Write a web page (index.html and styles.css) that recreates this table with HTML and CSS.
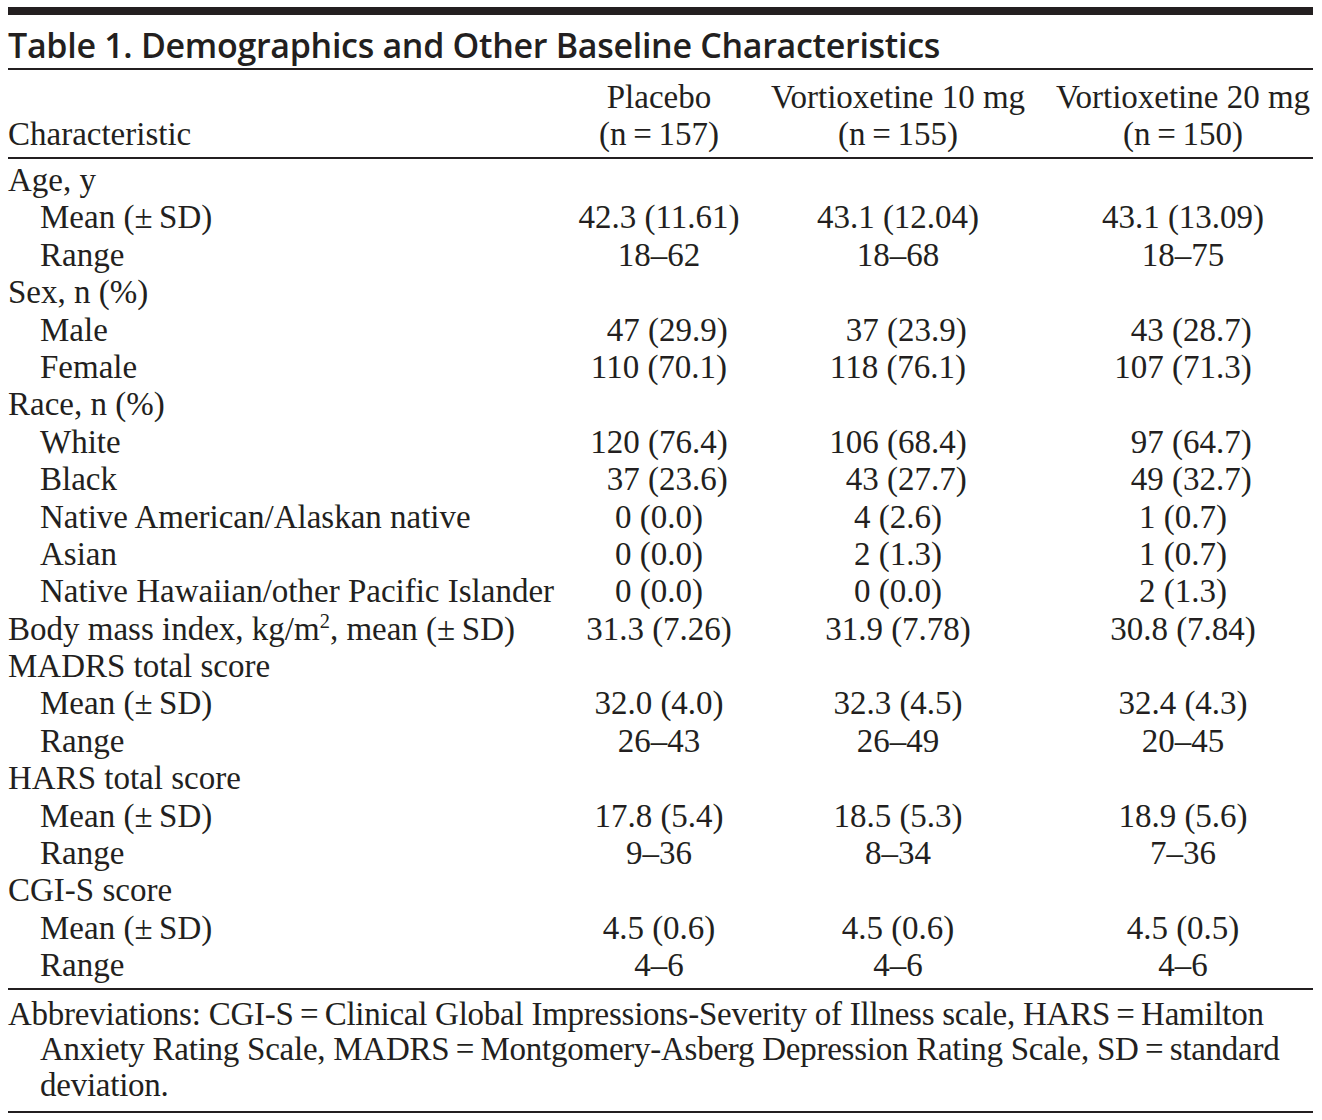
FILE: index.html
```html
<!DOCTYPE html>
<html lang="en">
<head>
<meta charset="utf-8">
<title>Table 1. Demographics and Other Baseline Characteristics</title>
<link rel="stylesheet" href="styles.css">
</head>
<body>
<div class="page">
  <div class="top-rule"></div>
  <h1 class="title">Table 1. Demographics and Other Baseline Characteristics</h1>
  <div class="table">
    <div class="head">
      <div class="hc label">Characteristic</div>
      <div class="hc">Placebo<br>(n&#8201;=&#8201;157)</div>
      <div class="hc">Vortioxetine 10 mg<br>(n&#8201;=&#8201;155)</div>
      <div class="hc">Vortioxetine 20 mg<br>(n&#8201;=&#8201;150)</div>
    </div>
    <div class="body">
      <div class="c label">Age, y</div><div class="c"></div><div class="c"></div><div class="c"></div>
      <div class="c label sub">Mean (&#177;&#8201;SD)</div><div class="c p">42.3 (11.61)</div><div class="c">43.1 (12.04)</div><div class="c">43.1 (13.09)</div>
      <div class="c label sub">Range</div><div class="c p">18–62</div><div class="c">18–68</div><div class="c">18–75</div>
      <div class="c label">Sex, n (%)</div><div class="c"></div><div class="c"></div><div class="c"></div>
      <div class="c label sub">Male</div><div class="c p">&#8199;47 (29.9)</div><div class="c">&#8199;37 (23.9)</div><div class="c">&#8199;43 (28.7)</div>
      <div class="c label sub">Female</div><div class="c p">110 (70.1)</div><div class="c">118 (76.1)</div><div class="c">107 (71.3)</div>
      <div class="c label">Race, n (%)</div><div class="c"></div><div class="c"></div><div class="c"></div>
      <div class="c label sub">White</div><div class="c p">120 (76.4)</div><div class="c">106 (68.4)</div><div class="c">&#8199;97 (64.7)</div>
      <div class="c label sub">Black</div><div class="c p">&#8199;37 (23.6)</div><div class="c">&#8199;43 (27.7)</div><div class="c">&#8199;49 (32.7)</div>
      <div class="c label sub">Native American/Alaskan native</div><div class="c p">0 (0.0)</div><div class="c">4 (2.6)</div><div class="c">1 (0.7)</div>
      <div class="c label sub">Asian</div><div class="c p">0 (0.0)</div><div class="c">2 (1.3)</div><div class="c">1 (0.7)</div>
      <div class="c label sub">Native Hawaiian/other Pacific Islander</div><div class="c p">0 (0.0)</div><div class="c">0 (0.0)</div><div class="c">2 (1.3)</div>
      <div class="c label">Body mass index, kg/m<sup>2</sup>, mean (&#177;&#8201;SD)</div><div class="c p">31.3 (7.26)</div><div class="c">31.9 (7.78)</div><div class="c">30.8 (7.84)</div>
      <div class="c label">MADRS total score</div><div class="c"></div><div class="c"></div><div class="c"></div>
      <div class="c label sub">Mean (&#177;&#8201;SD)</div><div class="c p">32.0 (4.0)</div><div class="c">32.3 (4.5)</div><div class="c">32.4 (4.3)</div>
      <div class="c label sub">Range</div><div class="c p">26–43</div><div class="c">26–49</div><div class="c">20–45</div>
      <div class="c label">HARS total score</div><div class="c"></div><div class="c"></div><div class="c"></div>
      <div class="c label sub">Mean (&#177;&#8201;SD)</div><div class="c p">17.8 (5.4)</div><div class="c">18.5 (5.3)</div><div class="c">18.9 (5.6)</div>
      <div class="c label sub">Range</div><div class="c p">9–36</div><div class="c">8–34</div><div class="c">7–36</div>
      <div class="c label">CGI-S score</div><div class="c"></div><div class="c"></div><div class="c"></div>
      <div class="c label sub">Mean (&#177;&#8201;SD)</div><div class="c p">4.5 (0.6)</div><div class="c">4.5 (0.6)</div><div class="c">4.5 (0.5)</div>
      <div class="c label sub">Range</div><div class="c p">4–6</div><div class="c">4–6</div><div class="c">4–6</div>
    </div>
  </div>
  <p class="note">Abbreviations: CGI-S&#8201;=&#8201;Clinical Global Impressions-Severity of Illness scale, HARS&#8201;=&#8201;Hamilton<br>Anxiety Rating Scale, MADRS&#8201;=&#8201;Montgomery-Asberg Depression Rating Scale, SD&#8201;=&#8201;standard<br>deviation.</p>
</div>
</body>
</html>
```

FILE: styles.css
```css
html, body {
  margin: 0;
  padding: 0;
  background: #ffffff;
}

.page {
  width: 1305px;
  padding: 7px 0 0 8px;
  color: #231f20;
  font-family: "Liberation Serif", "Times New Roman", serif;
  font-size: 33px;
}

.top-rule {
  height: 8px;
  background: #231f20;
}

.title {
  margin: 0;
  padding: 12px 0 5px 0;
  font-family: "Open Sans", sans-serif;
  font-weight: 600;
  font-size: 34px;
  line-height: 36px;
  letter-spacing: -0.3px;
  border-bottom: 2px solid #231f20;
}

.table {
  display: flex;
  flex-direction: column;
}

.head,
.body {
  display: grid;
  grid-template-columns: 567px 168px 310px 260px;
}

.head {
  padding: 9px 0 4px 0;
  border-bottom: 2px solid #231f20;
  line-height: 37px;
}

.hc {
  text-align: center;
  white-space: nowrap;
  align-self: end;
}

.body {
  padding: 3px 0 3px 0;
  border-bottom: 2px solid #231f20;
  line-height: 37.4px;
}

.c {
  text-align: center;
  white-space: nowrap;
  height: 37.4px;
}

.label {
  text-align: left;
}

.sub {
  padding-left: 32px;
}

sup {
  font-size: 0.62em;
  line-height: 0;
  vertical-align: 0.6em;
}

.note {
  margin: 0;
  padding: 7px 0 8px 32px;
  text-indent: -32px;
  line-height: 35.5px;
  letter-spacing: -0.25px;
  white-space: nowrap;
  border-bottom: 2px solid #231f20;
}
```
